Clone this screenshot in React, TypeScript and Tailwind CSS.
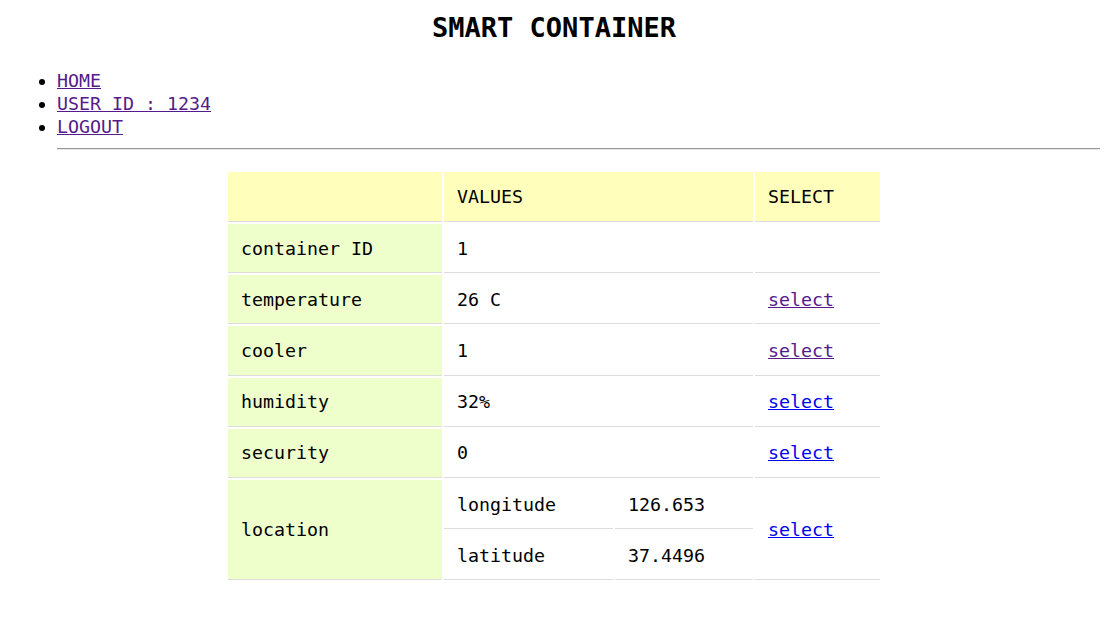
import React from "react";

const font = { fontFamily: '"DejaVu Sans Mono", "Liberation Mono", monospace' };

export default function App() {
  const visited = "text-[#551a8b] underline";
  const link = "text-[#0000ee] underline";
  const th = "h-[50px] border-b border-[#dddddd] bg-[#ffffbb] px-[13px] text-left font-normal align-middle";
  const tdA = "h-[49.2px] border-b border-[#dddddd] bg-[#eeffcc] px-[13px] align-middle";
  const td = "h-[49.2px] border-b border-[#dddddd] bg-white px-[13px] align-middle";
  return (
    <div className="min-h-[637px] bg-white px-2 pt-[11px] text-black text-[18.3px]" style={font}>
      <h1 className="text-center text-[27px] font-bold leading-[34px]">SMART CONTAINER</h1>
      <ul className="mt-[24px] list-disc pl-[49px] leading-[23px]">
        <li><a href="#" className={visited}>HOME</a></li>
        <li><a href="#" className={visited}>USER ID : 1234</a></li>
        <li><a href="#" className={visited}>LOGOUT</a></li>
        <hr className="mt-[10px] h-[2px] border-0 border-t border-b border-t-[#999999] border-b-[#e6e6e6]" />
      </ul>
      <table className="mx-auto mt-[20px] table-fixed border-separate border-spacing-[2px] leading-[23px]">
        <colgroup>
          <col className="w-[214px]" />
          <col className="w-[169px]" />
          <col className="w-[138px]" />
          <col className="w-[125px]" />
        </colgroup>
        <thead>
          <tr>
            <th className={th}></th>
            <th className={th} colSpan={2}>VALUES</th>
            <th className={th}>SELECT</th>
          </tr>
        </thead>
        <tbody>
          <tr>
            <td className={tdA}>container ID</td>
            <td className={td} colSpan={2}>1</td>
            <td className={td}></td>
          </tr>
          <tr>
            <td className={tdA}>temperature</td>
            <td className={td} colSpan={2}>26 C</td>
            <td className={td}><a href="#" className={visited}>select</a></td>
          </tr>
          <tr>
            <td className={tdA}>cooler</td>
            <td className={td} colSpan={2}>1</td>
            <td className={td}><a href="#" className={visited}>select</a></td>
          </tr>
          <tr>
            <td className={tdA}>humidity</td>
            <td className={td} colSpan={2}>32%</td>
            <td className={td}><a href="#" className={link}>select</a></td>
          </tr>
          <tr>
            <td className={tdA}>security</td>
            <td className={td} colSpan={2}>0</td>
            <td className={td}><a href="#" className={link}>select</a></td>
          </tr>
          <tr>
            <td className={tdA} rowSpan={2}>location</td>
            <td className={td}>longitude</td>
            <td className={td}>126.653</td>
            <td className={td} rowSpan={2}><a href="#" className={link}>select</a></td>
          </tr>
          <tr>
            <td className={td}>latitude</td>
            <td className={td}>37.4496</td>
          </tr>
        </tbody>
      </table>
    </div>
  );
}
